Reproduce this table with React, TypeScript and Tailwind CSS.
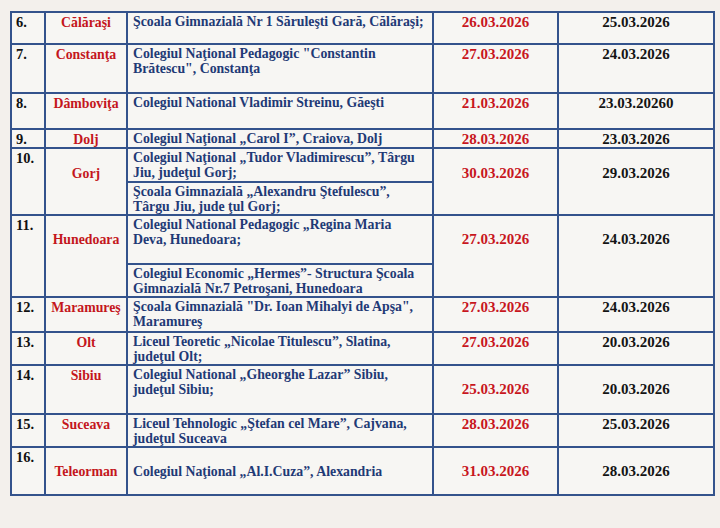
import React from 'react';

type Row = {
  nr: string;
  county: string;
  schools: string[][];
  date1: string;
  date2: string;
  heights: number[];
  align?: 'top' | 'middle';
  centerAll?: boolean;
  offset?: string;
};

const rows: Row[] = [
  { nr: '6.', county: 'Călăraşi', schools: [['Şcoala Gimnazială Nr 1 Săruleşti Gară, Călăraşi;']], date1: '26.03.2026', date2: '25.03.2026', heights: [32] },
  { nr: '7.', county: 'Constanţa', schools: [['Colegiul Naţional Pedagogic "Constantin', 'Brătescu", Constanţa']], date1: '27.03.2026', date2: '24.03.2026', heights: [49] },
  { nr: '8.', county: 'Dâmboviţa', schools: [['Colegiul National Vladimir Streinu, Găeşti']], date1: '21.03.2026', date2: '23.03.20260', heights: [36] },
  { nr: '9.', county: 'Dolj', schools: [['Colegiul Naţional „Carol I”, Craiova, Dolj']], date1: '28.03.2026', date2: '23.03.2026', heights: [18] },
  {
    nr: '10.',
    county: 'Gorj',
    schools: [
      ['Colegiul Naţional „Tudor Vladimirescu”, Târgu', 'Jiu, judeţul Gorj;'],
      ['Şcoala Gimnazială „Alexandru Ştefulescu”,', 'Târgu Jiu, jude ţul Gorj;'],
    ],
    date1: '30.03.2026',
    date2: '29.03.2026',
    heights: [34, 32],
    offset: 'pt-[17px]',
  },
  {
    nr: '11.',
    county: 'Hunedoara',
    schools: [
      ['Colegiul National Pedagogic „Regina Maria', 'Deva, Hunedoara;'],
      ['Colegiul Economic „Hermes”- Structura Şcoala', 'Gimnazială Nr.7 Petroşani, Hunedoara'],
    ],
    date1: '27.03.2026',
    date2: '24.03.2026',
    heights: [49, 33],
    offset: 'pt-[16px]',
  },
  { nr: '12.', county: 'Maramureş', schools: [['Şcoala Gimnazială "Dr. Ioan Mihalyi de Apşa",', 'Maramureş']], date1: '27.03.2026', date2: '24.03.2026', heights: [35] },
  { nr: '13.', county: 'Olt', schools: [['Liceul Teoretic „Nicolae Titulescu”, Slatina,', 'judeţul Olt;']], date1: '27.03.2026', date2: '20.03.2026', heights: [33] },
  { nr: '14.', county: 'Sibiu', schools: [['Colegiul National „Gheorghe Lazar” Sibiu,', 'judeţul Sibiu;']], date1: '25.03.2026', date2: '20.03.2026', heights: [49], align: 'middle' },
  { nr: '15.', county: 'Suceava', schools: [['Liceul Tehnologic „Ştefan cel Mare”, Cajvana,', 'judeţul Suceava']], date1: '28.03.2026', date2: '25.03.2026', heights: [33] },
  { nr: '16.', county: 'Teleorman', schools: [['Colegiul Naţional „Al.I.Cuza”, Alexandria']], date1: '31.03.2026', date2: '28.03.2026', heights: [48], align: 'middle', centerAll: true },
];

const cell = 'border-2 border-[#34538c] bg-[#f8f7f5]/80';

const Lines: React.FC<{ lines: string[] }> = ({ lines }) => (
  <>
    {lines.map((l, i) => (
      <div key={i} className="whitespace-nowrap">
        {l}
      </div>
    ))}
  </>
);

const App: React.FC = () => {
  return (
    <div
      className="w-[720px] h-[528px] overflow-hidden bg-[#f3f0ec] pt-[11px] pl-[10px]"
      style={{ fontFamily: '"Liberation Serif", "Times New Roman", serif' }}
    >
      <table className="table-fixed border-collapse w-[703px] text-[13.8px] leading-[15px] font-bold">
        <colgroup>
          <col className="w-[34px]" />
          <col className="w-[82px]" />
          <col className="w-[306px]" />
          <col className="w-[125px]" />
          <col className="w-[156px]" />
        </colgroup>
        <tbody>
          {rows.map((r) => {
            const span = r.schools.length;
            const dateAlign = r.offset
              ? `align-top ${r.offset}`
              : r.align === 'middle'
              ? 'align-middle'
              : 'align-top pt-[2px]';
            const countyAlign = r.offset
              ? `align-top ${r.offset}`
              : r.centerAll
              ? 'align-middle'
              : 'align-top pt-[2px]';
            const schoolAlign = r.centerAll ? 'align-middle' : 'align-top pt-[1px]';
            return r.schools.map((lines, i) => (
              <tr key={r.nr + i} style={{ height: r.heights[i] }}>
                {i === 0 && (
                  <>
                    <td rowSpan={span} className={`${cell} align-top pt-[2px] px-[4px] text-[14.5px] text-[#111]`}>
                      {r.nr}
                    </td>
                    <td rowSpan={span} className={`${cell} ${countyAlign} text-center text-[#c4161c]`}>
                      {r.county}
                    </td>
                  </>
                )}
                <td className={`${cell} ${schoolAlign} pl-[5px] text-[#1f3a76]`}>
                  <Lines lines={lines} />
                </td>
                {i === 0 && (
                  <>
                    <td rowSpan={span} className={`${cell} ${dateAlign} text-center text-[15px] text-[#c8161e]`}>
                      {r.date1}
                    </td>
                    <td rowSpan={span} className={`${cell} ${dateAlign} text-center text-[15px] text-[#141414]`}>
                      {r.date2}
                    </td>
                  </>
                )}
              </tr>
            ));
          })}
        </tbody>
      </table>
    </div>
  );
};

export default App;
